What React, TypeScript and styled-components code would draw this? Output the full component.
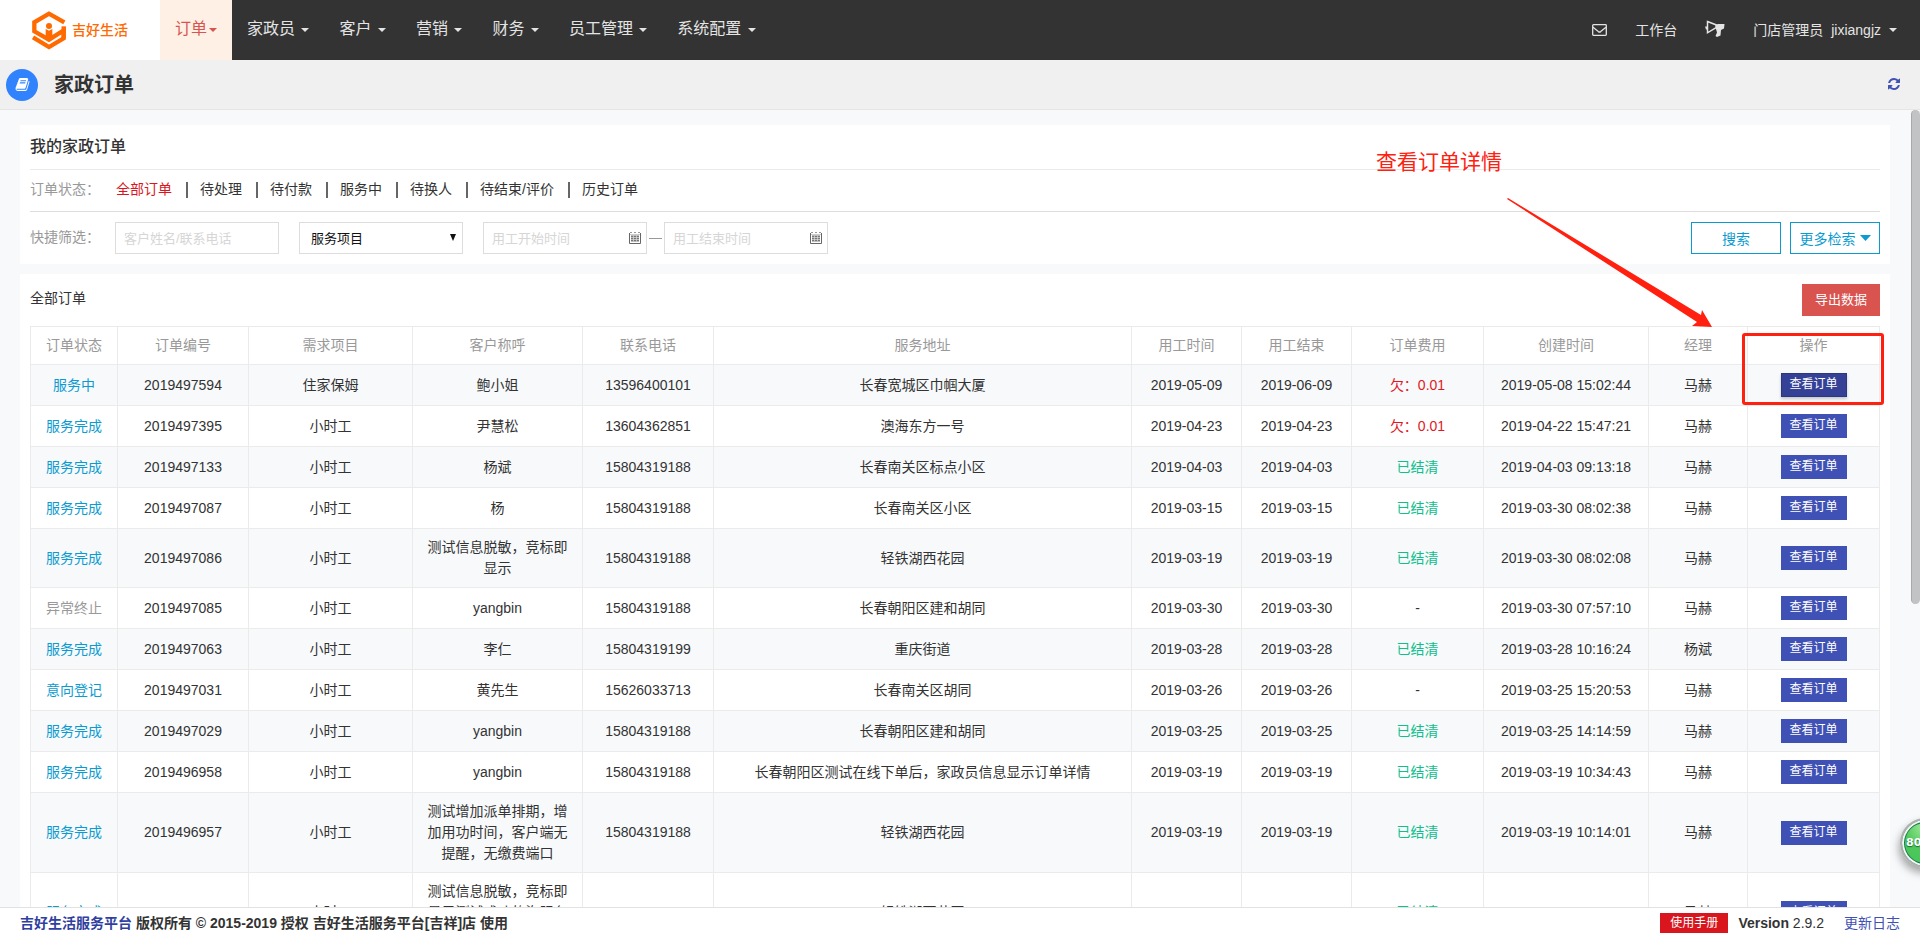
import React from "react";
import styled, { createGlobalStyle, css } from "styled-components";

const GlobalStyle = createGlobalStyle`
  *, *::before, *::after { box-sizing: border-box; }
  body {
    margin: 0;
    overflow: hidden;
    color: #333;
    background: #f7f9fb;
    font: 14px/21px "Liberation Sans", "Noto Sans CJK SC", sans-serif;
  }
  a { color: inherit; text-decoration: none; }
  button, input, select { font-family: inherit; border-radius: 0; margin: 0; }
  button { cursor: pointer; }
`;

const Page = styled.div`
  position: relative;
  display: flex;
  flex-direction: column;
  height: 100vh;
  overflow: hidden;
`;

/* ---------- top navigation ---------- */

const TopBar = styled.header`
  display: flex;
  flex: none;
  height: 60px;
  background: #333;
  color: #e4e4e4;
`;

const Brand = styled.a`
  display: flex;
  align-items: center;
  gap: 6px;
  width: 160px;
  padding-left: 32px;
  background: #fff;
  color: #ff6a00;
  font-weight: 500;
`;

const Nav = styled.nav`
  display: flex;
  flex: 1;
`;

const NavItem = styled.a<{ $active?: boolean }>`
  padding: 0 15px;
  font-size: 16px;
  line-height: 58px;
  ${(p) => p.$active && css`background: #fef0e5; color: #d9534f;`}
`;

const Caret = styled.span`
  display: inline-block;
  margin-left: 2px;
  vertical-align: middle;
  border: 4px solid transparent;
  border-top-color: currentColor;
  border-bottom: 0;
`;

const UserArea = styled.div`
  display: flex;
  align-items: center;
  padding-right: 9px;
`;

const UserLink = styled.a`
  display: flex;
  align-items: center;
  gap: 6px;
  padding: 0 14px;
  line-height: 60px;
`;

const UserName = styled.span`
  margin-left: 2px;
`;

/* ---------- page heading ---------- */

const Heading = styled.div`
  display: flex;
  flex: none;
  align-items: center;
  height: 50px;
  padding: 0 19px 0 6px;
  background: #f0f0f0;
  border-bottom: 1px solid #e5e5e5;
`;

const HeadingIcon = styled.span`
  display: grid;
  place-items: center;
  width: 32px;
  height: 32px;
  border-radius: 50%;
  background: #3182fd;
  color: #fff;
`;

const HeadingTitle = styled.h1`
  flex: 1;
  margin: 0 16px;
  font-size: 20px;
  line-height: 48px;
`;

const IconButton = styled.button`
  display: flex;
  padding: 0 0 2px;
  border: 0;
  background: none;
  color: #3f51b5;
`;

/* ---------- content ---------- */

const Content = styled.main`
  position: relative;
  flex: 1;
  min-height: 0;
  overflow: hidden;
  padding: 15px 30px 0 20px;
`;

const ScrollThumb = styled.div`
  position: absolute;
  top: 0;
  right: 0;
  width: 9px;
  height: 62%;
  border-left: 1px solid #a9a9aa;
  border-radius: 5px;
  background: #c2c3c5;
`;

const Panel = styled.section`
  margin-bottom: 10px;
  padding: 0 10px 10px;
  background: #fff;
`;

const PanelTitle = styled.h2`
  margin: 0;
  padding-bottom: 1px;
  border-bottom: 1px solid #eaeaea;
  font-size: 16px;
  font-weight: 500;
  line-height: 43px;
`;

const FilterRow = styled.div`
  display: flex;
  align-items: center;
  height: 42px;
  padding-bottom: 2px;
  border-bottom: 1px solid #ddd;
`;

const FilterLabel = styled.span`
  flex: none;
  width: 86px;
  color: #999;
`;

const StatusLink = styled.a<{ $active?: boolean }>`
  display: flex;
  align-items: center;
  color: ${(p) => (p.$active ? "#d9161d" : "#333")};

  &:not(:first-of-type)::before {
    content: "";
    width: 2px;
    height: 16px;
    margin: 0 12px 0 14px;
    background: #666;
  }
`;

const SearchRow = styled.form`
  display: flex;
  align-items: center;
  padding-top: 10px;
`;

const SearchLabel = styled(FilterLabel)`
  width: 85px;
  padding-bottom: 2px;
`;

const fieldStyle = css`
  width: 164px;
  height: 32px;
  border: 1px solid #ddd;
  background: #fff;
  font-size: 13px;
`;

const TextField = styled.input`
  ${fieldStyle}
  padding: 0 8px;
  &::placeholder { color: #d6d6d6; opacity: 1; }
`;

const SelectBox = styled.span`
  position: relative;
  margin: 0 20px;

  svg {
    position: absolute;
    top: 12px;
    right: 7px;
    pointer-events: none;
  }
`;

const SelectField = styled.select`
  ${fieldStyle}
  padding: 0 11px;
  appearance: none;
  color: #111;
`;

const DateBox = styled.span`
  position: relative;

  svg {
    position: absolute;
    top: 10px;
    right: 6px;
  }
`;

const Dash = styled.span`
  width: 13px;
  height: 1px;
  margin: 0 2px;
  background: #999;
`;

const OutlineButton = styled.button`
  display: flex;
  align-items: center;
  justify-content: center;
  gap: 4px;
  width: 90px;
  height: 32px;
  padding: 0;
  border: 1px solid #0c9bd0;
  background: #fff;
  color: #0c9bd0;
  font-size: 14px;
`;

const SearchActions = styled.div`
  display: flex;
  gap: 9px;
  margin-left: auto;
`;

const ListHead = styled.div`
  display: flex;
  align-items: center;
  justify-content: space-between;
  padding: 10px 0;
`;

const ListTitle = styled.h3`
  margin: 0;
  padding-bottom: 3px;
  font-size: 14px;
  font-weight: 400;
`;

const ExportButton = styled.button`
  width: 78px;
  height: 32px;
  padding: 0 0 3px;
  border: 0;
  background: #d9534f;
  color: #fff;
  font-size: 13px;
`;

const Table = styled.table`
  width: 100%;
  table-layout: fixed;
  border-collapse: collapse;
  text-align: center;

  th, td {
    padding: 8px 14px;
    border: 1px solid #ebebeb;
  }
  th {
    padding: 8px 0;
    color: #999;
    font-weight: 400;
  }
  tbody tr:nth-child(odd) { background: #f7f9fb; }
`;

const Col = styled.col<{ $w?: number }>`
  width: ${(p) => (p.$w ? p.$w + "px" : "auto")};
`;

const Cell = styled.td<{ $tone?: Tone }>`
  white-space: nowrap;
  color: ${(p) => tones[p.$tone || "text"]};
`;

const WrapCell = styled.td`
  line-height: 21px;
`;

const ViewButton = styled.button<{ $hover?: boolean }>`
  display: block;
  width: 66px;
  height: 24px;
  margin: 0 auto;
  padding: 0 0 1px;
  border: 1px solid ${(p) => (p.$hover ? "#2c387e" : "#3f51b5")};
  background: ${(p) => (p.$hover ? "#344197" : "#3f51b5")};
  box-shadow: ${(p) => (p.$hover ? "0 2px 3px rgba(0, 0, 0, 0.2)" : "none")};
  color: #fff;
  font-size: 12px;
  line-height: 21px;
`;

const ActionCell = styled.td`
  && { padding: 8px 0; }
`;

/* ---------- footer ---------- */

const Footer = styled.footer`
  display: flex;
  flex: none;
  align-items: center;
  height: 30px;
  padding: 1px 20px 0;
  border-top: 1px solid #e2e2e2;
  background: #fff;
`;

const Copyright = styled.strong`
  flex: 1;
  font-weight: 600;
  a { color: #303f9f; }
`;

const Manual = styled.a`
  width: 68px;
  margin-right: 10px;
  background: #d9161d;
  color: #fff;
  font-size: 12px;
  line-height: 20px;
  text-align: center;
`;

const ChangeLog = styled.a`
  margin-left: 20px;
  color: #3f51b5;
`;

/* ---------- overlays ---------- */

const Note = styled.div`
  position: absolute;
  top: 147px;
  right: 418px;
  color: #ff2010;
  font-size: 21px;
  line-height: 30px;
`;

const Arrow = styled.svg`
  position: absolute;
  top: 198px;
  right: 207px;
`;

const Highlight = styled.div`
  position: absolute;
  top: 333px;
  right: 36px;
  width: 142px;
  height: 72px;
  border: 3px solid #ff2010;
  border-radius: 3px;
  pointer-events: none;
`;

const Speed = styled.div`
  position: absolute;
  right: -30px;
  bottom: 69px;
  width: 50px;
  height: 50px;
  padding-left: 4px;
  border: 2px solid #b0b0b0;
  border-radius: 50%;
  background: radial-gradient(circle at 50% 15%, #a2eb9c 0, #4fc85a 45%, #43c35a 100%);
  box-shadow: inset 0 0 0 2px #f4f4f4, inset 0 0 0 3px #167a4a,
    -1px 5px 9px rgba(0, 0, 0, 0.35);
  color: #fff;
  font: bold 11px/46px "DejaVu Sans", sans-serif;
  text-shadow: 0 1px 1px #146b35;
`;

/* ---------- icons ---------- */

const LogoMark = () => (
  <svg width="34" height="39" viewBox="97 32 102 117" aria-hidden="true">
    <path
      d="M194 66 148 40 104 66V93L148 118 192 90V114L148 140 100 111"
      fill="none"
      stroke="#ff6a00"
      strokeWidth="13"
    />
    <path d="M192 78v36" stroke="#ff6a00" strokeWidth="13" />
    <circle cx="148" cy="77" r="9" fill="#ff6a00" />
    <path d="M138 86l10 5 10-5v22l-10 10-10-10z" fill="#ff6a00" />
  </svg>
);

const BookIcon = () => (
  <svg width="15" height="15" viewBox="0 0 1792 1792" fill="currentColor" aria-hidden="true">
    <path d="M1703 478q40 57 18 129l-275 906q-19 64-76.500 107.500t-122.500 43.500h-923q-77 0-148.500-53.500t-99.500-131.500q-24-67-2-127 0-4 3-27t4-37q1-8-3-21.500t-3-19.500q2-11 8-21t16.500-23.500 16.500-23.500q23-38 45-91.500t30-91.500q3-10 .5-30t-.5-28q3-11 17-28t17-23q21-36 42-92t25-90q1-9-2.500-32t.5-28q4-13 22-30.500t22-22.500q19-26 42.500-84.500t27.500-96.500q1-8-3-25.500t-2-26.500q2-8 9-18t18-23 17-21q8-12 16.500-30.500t15-35 16-36 19.500-32 26.500-23.500 36-11.500 47.500 5.500l-1 3q38-9 51-9h761q74 0 114 56t18 130l-274 906q-36 119-71.500 153.500t-128.500 34.500h-869q-27 0-38 15-11 16-1 43 24 70 144 70h923q29 0 56-15.500t35-41.500l300-987q7-22 5-57 38 15 59 43zm-1064 2q-4 13 2 22.500t20 9.500h608q13 0 25.500-9.500t16.500-22.500l21-64q4-13-2-22.500t-20-9.500h-608q-13 0-25.500 9.500t-16.500 22.500zm-83 256q-4 13 2 22.500t20 9.500h608q13 0 25.500-9.500t16.500-22.500l21-64q4-13-2-22.500t-20-9.500h-608q-13 0-25.500 9.500t-16.500 22.500z" />
  </svg>
);

const RefreshIcon = () => (
  <svg width="14" height="14" viewBox="0 0 1792 1792" fill="currentColor" aria-hidden="true">
    <path d="M1639 1056q0 5-1 7-64 268-268 434.500t-478 166.500q-146 0-282.500-55t-243.500-157l-129 129q-19 19-45 19t-45-19-19-45v-448q0-26 19-45t45-19h448q26 0 45 19t19 45-19 45l-137 137q71 66 161 102t187 36q134 0 250-65t186-179q11-17 53-117 8-23 30-23h192q13 0 22.500 9.500t9.500 22.500zm25-800v448q0 26-19 45t-45 19h-448q-26 0-45-19t-19-45 19-45l138-138q-148-137-349-137-134 0-250 65t-186 179q-11 17-53 117-8 23-30 23h-199q-13 0-22.500-9.500t-9.500-22.500v-7q65-268 270-434.500t480-166.500q146 0 284 55.500t245 156.500l130-129q19-19 45-19t45 19 19 45z" />
  </svg>
);

const MailIcon = () => (
  <svg width="15" height="12" viewBox="0 0 15 12" fill="none" stroke="currentColor" aria-hidden="true">
    <rect x="0.7" y="0.7" width="13.6" height="10.6" rx="0.8" strokeWidth="1.3" />
    <path d="M1 3.200 6.300 7.600Q7.500 8.400 8.700 7.600L14 3.200" strokeWidth="1.300" />
  </svg>
);

const HornIcon = () => (
  <svg width="20" height="20" viewBox="0 0 20 20" aria-hidden="true">
    <path d="M2.500 1.500 14 6 2.500 12.800z" fill="none" stroke="currentColor" strokeWidth="1.500" />
    <path d="M0 6.500h3v3H1z" fill="currentColor" />
    <path d="M10 5.500 13 4h6.500l-.5 4.500-3 1.500-.5 5.500-3.500 1.500-1.500-1 1.500-3.500z" fill="currentColor" />
  </svg>
);

const CalendarIcon = () => (
  <svg width="12" height="12" viewBox="0 0 12 12" fill="none" stroke="#777" aria-hidden="true">
    <path d="M.5 1V11.500H11.500V1" stroke="#666" />
    <path d="M1 .5h10" stroke="#999" strokeDasharray="2 2" />
    <path d="M1 2.500h10" stroke="#ccc" />
    <path d="M2 3.500h8v6H2z" fill="#777" stroke="none" />
    <path d="M2 5.500h8M2 7.500h8M4.500 3.500v6M7.500 3.500v6" stroke="#ddd" strokeWidth="0.7" />
  </svg>
);

const Triangle = ({ w, h, color }: { w: number; h: number; color: string }) => (
  <svg width={w} height={h} viewBox="0 0 10 10" preserveAspectRatio="none" aria-hidden="true">
    <path d="M0 0h10L5 10z" fill={color} />
  </svg>
);

/* ---------- data ---------- */

const tones = {
  text: "#333",
  blue: "#0c9bd0",
  gray: "#999",
  red: "#e0181f",
  green: "#0fbf8c",
};
type Tone = keyof typeof tones;

const menus = ["家政员", "客户", "营销", "财务", "员工管理", "系统配置"];
const statuses = ["全部订单", "待处理", "待付款", "服务中", "待换人", "待结束/评价", "历史订单"];

const columns: [string, number?][] = [
  ["订单状态", 87],
  ["订单编号", 131],
  ["需求项目", 164],
  ["客户称呼", 170],
  ["联系电话", 131],
  ["服务地址"],
  ["用工时间", 110],
  ["用工结束", 110],
  ["订单费用", 132],
  ["创建时间", 165],
  ["经理", 99],
  ["操作", 132],
];

// status, number, item, customer, phone, address, start, end, fee, created, manager
const orders: string[][] = [
  ["服务中", "2019497594", "住家保姆", "鲍小姐", "13596400101", "长春宽城区巾帼大厦", "2019-05-09", "2019-06-09", "欠：0.01", "2019-05-08 15:02:44", "马赫"],
  ["服务完成", "2019497395", "小时工", "尹慧松", "13604362851", "澳海东方一号", "2019-04-23", "2019-04-23", "欠：0.01", "2019-04-22 15:47:21", "马赫"],
  ["服务完成", "2019497133", "小时工", "杨斌", "15804319188", "长春南关区标点小区", "2019-04-03", "2019-04-03", "已结清", "2019-04-03 09:13:18", "马赫"],
  ["服务完成", "2019497087", "小时工", "杨", "15804319188", "长春南关区小区", "2019-03-15", "2019-03-15", "已结清", "2019-03-30 08:02:38", "马赫"],
  ["服务完成", "2019497086", "小时工", "测试信息脱敏，竞标即显示", "15804319188", "轻铁湖西花园", "2019-03-19", "2019-03-19", "已结清", "2019-03-30 08:02:08", "马赫"],
  ["异常终止", "2019497085", "小时工", "yangbin", "15804319188", "长春朝阳区建和胡同", "2019-03-30", "2019-03-30", "-", "2019-03-30 07:57:10", "马赫"],
  ["服务完成", "2019497063", "小时工", "李仁", "15804319199", "重庆街道", "2019-03-28", "2019-03-28", "已结清", "2019-03-28 10:16:24", "杨斌"],
  ["意向登记", "2019497031", "小时工", "黄先生", "15626033713", "长春南关区胡同", "2019-03-26", "2019-03-26", "-", "2019-03-25 15:20:53", "马赫"],
  ["服务完成", "2019497029", "小时工", "yangbin", "15804319188", "长春朝阳区建和胡同", "2019-03-25", "2019-03-25", "已结清", "2019-03-25 14:14:59", "马赫"],
  ["服务完成", "2019496958", "小时工", "yangbin", "15804319188", "长春朝阳区测试在线下单后，家政员信息显示订单详情", "2019-03-19", "2019-03-19", "已结清", "2019-03-19 10:34:43", "马赫"],
  ["服务完成", "2019496957", "小时工", "测试增加派单排期，增加用功时间，客户端无提醒，无缴费端口", "15804319188", "轻铁湖西花园", "2019-03-19", "2019-03-19", "已结清", "2019-03-19 10:14:01", "马赫"],
  ["服务完成", "2019496956", "小时工", "测试信息脱敏，竞标即显示测试成功的沟服务信息显示", "15804319188", "轻铁湖西花园", "2019-03-19", "2019-03-19", "已结清", "2019-03-19 10:05:12", "马赫"],
];

const feeTone = (fee: string): Tone =>
  fee.startsWith("欠") ? "red" : fee === "-" ? "text" : "green";

export default function App() {
  return (
    <Page>
      <GlobalStyle />
      <TopBar>
        <Brand href="#">
          <LogoMark />
          吉好生活
        </Brand>
        <Nav>
          <NavItem href="#" $active>
            订单<Caret />
          </NavItem>
          {menus.map((m) => (
            <NavItem href="#" key={m}>
              {m} <Caret />
            </NavItem>
          ))}
        </Nav>
        <UserArea>
          <UserLink href="#" aria-label="消息">
            <MailIcon />
          </UserLink>
          <UserLink href="#">工作台</UserLink>
          <UserLink href="#" aria-label="公告">
            <HornIcon />
          </UserLink>
          <UserLink href="#">
            门店管理员 <UserName>jixiangjz</UserName>
            <Caret />
          </UserLink>
        </UserArea>
      </TopBar>

      <Heading>
        <HeadingIcon>
          <BookIcon />
        </HeadingIcon>
        <HeadingTitle>家政订单</HeadingTitle>
        <IconButton type="button" aria-label="刷新">
          <RefreshIcon />
        </IconButton>
      </Heading>

      <Content>
        <Panel>
          <PanelTitle>我的家政订单</PanelTitle>
          <FilterRow>
            <FilterLabel>订单状态：</FilterLabel>
            {statuses.map((s, i) => (
              <StatusLink href="#" key={s} $active={i === 0}>
                {s}
              </StatusLink>
            ))}
          </FilterRow>
          <SearchRow onSubmit={(e) => e.preventDefault()}>
            <SearchLabel as="label" htmlFor="customer">
              快捷筛选：
            </SearchLabel>
            <TextField id="customer" placeholder="客户姓名/联系电话" />
            <SelectBox>
              <SelectField aria-label="服务项目">
                <option>服务项目</option>
              </SelectField>
              <Triangle w={6} h={7} color="#111" />
            </SelectBox>
            <DateBox>
              <TextField aria-label="用工开始时间" placeholder="用工开始时间" />
              <CalendarIcon />
            </DateBox>
            <Dash />
            <DateBox>
              <TextField aria-label="用工结束时间" placeholder="用工结束时间" />
              <CalendarIcon />
            </DateBox>
            <SearchActions>
              <OutlineButton type="submit">搜索</OutlineButton>
              <OutlineButton type="button">
                更多检索
                <Triangle w={11} h={6} color="#0c9bd0" />
              </OutlineButton>
            </SearchActions>
          </SearchRow>
        </Panel>

        <Panel>
          <ListHead>
            <ListTitle>全部订单</ListTitle>
            <ExportButton type="button">导出数据</ExportButton>
          </ListHead>
          <Table>
            <colgroup>
              {columns.map(([name, w]) => (
                <Col key={name} $w={w} />
              ))}
            </colgroup>
            <thead>
              <tr>
                {columns.map(([name]) => (
                  <th key={name} scope="col">
                    {name}
                  </th>
                ))}
              </tr>
            </thead>
            <tbody>
              {orders.map((o, i) => (
                <tr key={o[1]}>
                  <Cell $tone={o[0] === "异常终止" ? "gray" : "blue"}>{o[0]}</Cell>
                  <Cell>{o[1]}</Cell>
                  <Cell>{o[2]}</Cell>
                  <WrapCell>{o[3]}</WrapCell>
                  <Cell>{o[4]}</Cell>
                  <Cell>{o[5]}</Cell>
                  <Cell>{o[6]}</Cell>
                  <Cell>{o[7]}</Cell>
                  <Cell $tone={feeTone(o[8])}>{o[8]}</Cell>
                  <Cell>{o[9]}</Cell>
                  <Cell>{o[10]}</Cell>
                  <ActionCell>
                    <ViewButton type="button" $hover={i === 0}>
                      查看订单
                    </ViewButton>
                  </ActionCell>
                </tr>
              ))}
            </tbody>
          </Table>
        </Panel>
        <ScrollThumb />
      </Content>

      <Footer>
        <Copyright>
          <a href="#">吉好生活服务平台</a> 版权所有 © 2015-2019 授权 吉好生活服务平台[吉祥]店 使用
        </Copyright>
        <Manual href="#">使用手册</Manual>
        <span>
          <b>Version</b> 2.9.2
        </span>
        <ChangeLog href="#">更新日志</ChangeLog>
      </Footer>

      <Note>查看订单详情</Note>
      <Arrow width="206" height="130" viewBox="0 0 206 130" aria-hidden="true">
        <path d="M0 1 1 0 194 117 195 112 205 129 185 128 190 124z" fill="#ff2010" />
      </Arrow>
      <Highlight />
      <Speed>80</Speed>
    </Page>
  );
}
